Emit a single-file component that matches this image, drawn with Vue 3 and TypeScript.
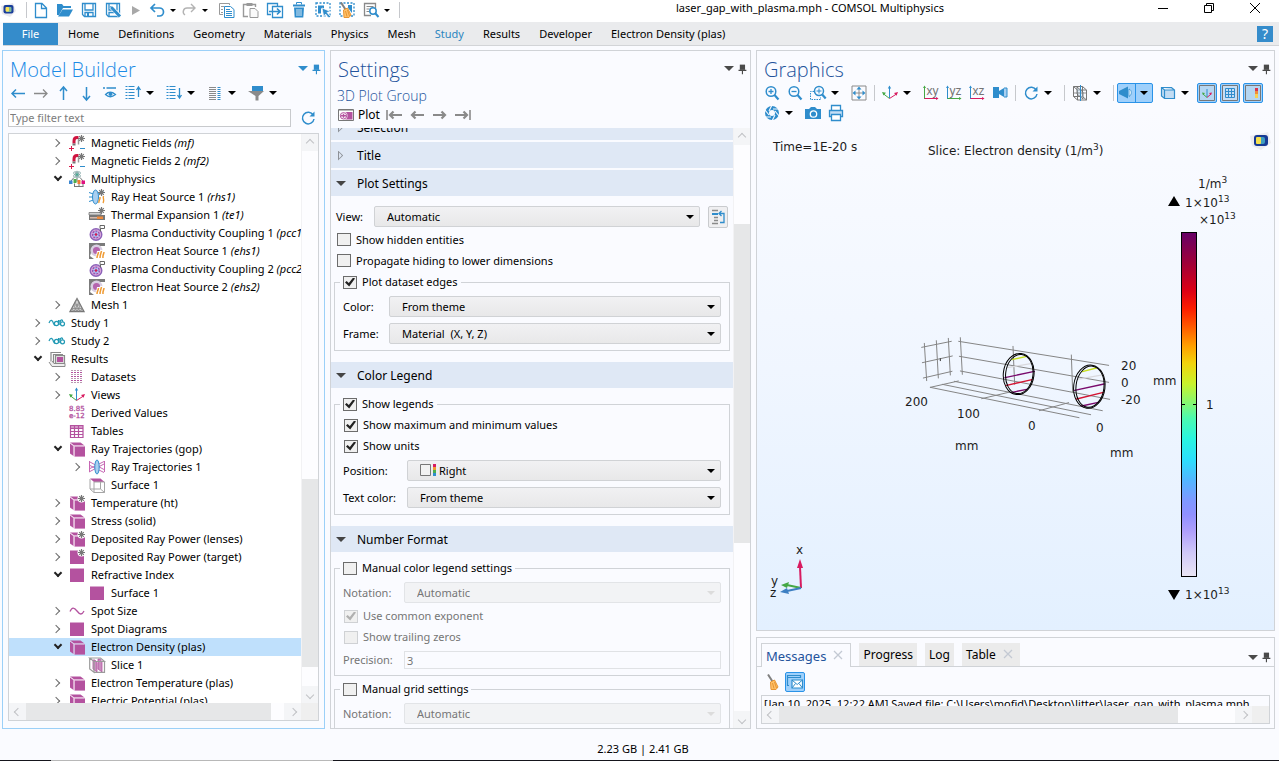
<script setup lang="ts">
import { ref } from 'vue'

type Tool = { kind: 'icon' | 'caret' | 'sep' | 'toggle'; icon?: string; label?: string }
type Node = { level: number; state: 'open' | 'closed' | 'leaf'; icon: string; text: string; tag?: string; selected?: boolean }

const B = '#2f8dcc'
const G = '#8a8a8a'
const M = '#b4529f'

const star = `<g stroke="#777" stroke-width="1.200"><path d="M12.500 0v7M9 3.500h7M10.200 1.200l4.600 4.600M14.800 1.200l-4.600 4.600"/></g><circle cx="12.500" cy="3.500" r="1.800" fill="#777"/>`
const cube = `<path d="M1 1.500h10.500l4 3H5.200z" fill="${M}"/><path d="M1 2.400l3.600 2.700v10L1 12.400z" fill="${M}"/><path d="M5.500 5.300H16V15.600H5.500z" fill="${M}"/><path d="M1 2l4 3h10.500M5 5v10.500" fill="none" stroke="#ecc9e5" stroke-width=".8"/>`
const plasma = `<circle cx="7" cy="9.500" r="5.800" fill="#dba9dc" stroke="#8c62b8" stroke-width="1.400"/><circle cx="7" cy="9.500" r="3.400" fill="#b9c3f2" stroke="#9b4fae" stroke-width="1.400" stroke-dasharray="2 1"/><path d="M7 6.500v6M4 9.500h6" stroke="#7f8fe0" stroke-width=".8"/><circle cx="7" cy="9.500" r="1.300" fill="#d81b4c"/><path d="M11.500 6.500v-3h-.500v-3h4.500v3h-4" fill="#fff" stroke="#666"/>`
const electron = `<path d="M0 0h16v3H0zM0 3h4l-3 10 4 3H0z" fill="#7b7b7b"/><circle cx="7.500" cy="7.500" r="4.800" fill="#b565ae" stroke="#d9cfe2" stroke-width="2.500"/><path d="M8 15c0-3 1.500-4 1.500-7M11 15c0-3 1-5 1.500-8M14 15c-.5-3 1-4 1-7" fill="none" stroke="#fff" stroke-width="3"/><path d="M8 15c0-3 1.500-4 1.500-6M11 15c0-3 1-5 1.500-7M14 15c-.5-3 1-4 1-6" fill="none" stroke="#ef9a32" stroke-width="1.500"/>`
const magnet = `<path d="M5 8.500V6C5 3.500 6 2.500 8 2.500h1.500" fill="none" stroke="#cf1440" stroke-width="3"/><path d="M9.500 4v5.500" stroke="#999" stroke-width="1.500"/><path d="M3.500 9.500h3" stroke="#777" stroke-width="2"/>${star}<path d="M0 13.500h5M2.500 11v5" stroke="#d81b4c"/><path d="M11 13.500h5" stroke="${B}"/>`
const study = `<path d="M0 8c1.500-4 3.500-3 4.500 .5.5 1.500 1 2 2 2M9.500 5v5M11 5v5" fill="none" stroke="#2199b4" stroke-width="1.200"/><circle cx="7.500" cy="8.500" r="2.100" fill="none" stroke="#2199b4" stroke-width="1.200"/><path d="M11 7c.5-3 3-2.500 2.500-.3" fill="none" stroke="#2199b4" stroke-width="1.200"/><circle cx="13.500" cy="8.800" r="2" fill="none" stroke="#2199b4" stroke-width="1.200"/>`
const broom = `<path d="M2 0.500l4.500 7" stroke="#808080" stroke-width="2"/><path d="M4.500 8l4-2 3.500 7-2 2.500H5z" fill="#ffc169" stroke="#e89532"/><path d="M6.500 9l1.500 5.500M8.500 8l2 6" stroke="#e89532" fill="none"/>`
const axesC = (x: string, y: string, z: string) => `<path d="M7.500 13V1.500" stroke="${y}"/><path d="M5.800 3.500l1.700-3 1.700 3z" fill="${y}"/><path d="M7.500 13.500L1 8.500" stroke="${x}"/><path d="M0 7l4 .8-2.500 2.600z" fill="${x}"/><path d="M7.500 13.500l7-4.500" stroke="${z}"/><path d="M16 7l-4 1 2.500 2.800z" fill="${z}"/>`
const plane = (t: string, a: string, b: string) => `<path d="M1.500 2v12" stroke="${a}"/><path d="M0 3l1.500-2.500L3 3z" fill="${a}"/><path d="M1.500 13.500h13" stroke="${b}"/><path d="M13 12l2.500 1.500L13 15z" fill="${b}"/><text x="3.500" y="9.500" font-family="Liberation Sans, sans-serif" font-size="12" fill="#757575">${t}</text>`
const listBase = (c: string) => [1.5, 4.5, 7.5, 10.5, 13.5].map((y) => `<path d="M3.500 ${y}h6" stroke="${c}"/><path d="M0.500 ${y}h2" stroke="${c}"/>`).join('')

const icons: Record<string, string> = {
  logo: `<path d="M0 4l12-3 3 8-6 6-8-3z" fill="#e9e9ee"/><rect x="2.500" y="3" width="10" height="8.500" rx="2" fill="#1a3e9a"/><rect x="5" y="5" width="5.500" height="5" rx="1" fill="#7fbb9a"/><rect x="4.500" y="5" width="3.500" height="4.500" rx="1" fill="#fbe25a"/>`,
  new: `<path d="M2.500 1.500h6.500l4.500 4.500v9.500h-11zM8.500 1.500v5h5" fill="none" stroke="${B}" stroke-width="1.300"/>`,
  open: `<path d="M0 2h5l1.500 2H14v2H6L2 13H0z" fill="${B}"/><path d="M5.500 7.500H16l-4 7H1z" fill="${B}"/>`,
  save: `<path d="M1.500 1.500h13v13h-11l-2-2z" fill="none" stroke="${B}" stroke-width="1.300"/><path d="M4 2v6h8V2" fill="none" stroke="${B}" stroke-width="1.300"/><path d="M4 14v-3.500h8V14" fill="none" stroke="${B}" stroke-width="1.300"/><path d="M6 11h2v3H6z" fill="${B}"/>`,
  saveas: `<path d="M1.500 1.500h13v13h-11l-2-2z" fill="none" stroke="${B}" stroke-width="1.300"/><path d="M4 2v6h8V2M4 14v-3.500h5" fill="none" stroke="${B}" stroke-width="1.300"/><path d="M6 5l10 10" stroke="#fff" stroke-width="4"/><path d="M6.500 5.500l8.500 9" stroke="${B}" stroke-width="3"/><path d="M5 4l1 3 2-2z" fill="${B}"/>`,
  play: `<path d="M5 4l8 4.500L5 13z" fill="#a8a8a8"/>`,
  undo: `<path d="M6 2L2 6l4 4M2 6h8.500a3.800 3.800 0 0 1 0 8H8" fill="none" stroke="${B}" stroke-width="1.700"/>`,
  redo: `<path d="M10 2l4 4-4 4M14 6H6a3.800 3.800 0 0 0-2 7" fill="none" stroke="#b3b3b3" stroke-width="1.400"/>`,
  copy: `<path d="M4 12.500H.5V1.500h10V3" fill="none" stroke="#999"/><path d="M2 4.500h3M2 7.500h2M2 10.500h2" stroke="#999"/><path d="M5.500 4.500h6l3.500 3v8H5.500z" fill="#fff" stroke="${B}"/><path d="M7 7.500h4M7 9.500h6M7 11.500h6M7 13.500h6" stroke="${B}"/>`,
  paste: `<path d="M5 14.500H.5V2.500h12V5" fill="none" stroke="#999" stroke-width="1.400"/><path d="M3.500 1h6v3h-6z" fill="#999"/><path d="M7 6.500h5l3 3v6H7z" fill="#fafafa" stroke="#999"/>`,
  dup: `<path d="M4 12.500H.5V1.500h10V4" fill="none" stroke="${B}" stroke-width="1.300"/><path d="M5.500 4.500h10v11h-10z" fill="#fff" stroke="${B}" stroke-width="1.300"/><path d="M2 9.500h11M10 6.500l3 3-3 3" fill="none" stroke="${B}" stroke-width="1.700"/>`,
  trash: `<path d="M2 3.500h12" stroke="${B}" stroke-width="2"/><path d="M5.500 2.500v-2h5v2" fill="none" stroke="${B}"/><path d="M3 5.500h10l-.7 10H3.700z" fill="${B}"/><path d="M6 7v7M8 7v7M10 7v7" stroke="#fff" stroke-width=".8"/>`,
  select: `<rect x="1" y="1" width="14" height="13" fill="none" stroke="${B}" stroke-width="1.300" stroke-dasharray="2 1.500"/><path d="M3 3.500h6v3H6v5H3z" fill="${B}"/><path d="M7 6l8.500 3.500-3.500 1 3.500 4-1.500 1.500-3.500-4-1.700 3z" fill="${B}" stroke="#fff" stroke-width=".7"/>`,
  clearsel: `<rect x="1" y="1" width="14" height="13" fill="none" stroke="${B}" stroke-width="1.300" stroke-dasharray="2 1.500"/><path d="M9 3h4v8l-4-5z" fill="${B}"/>${broom}`,
  find: `<path d="M8 13.500H1.500v-12h11V6" fill="none" stroke="${G}" stroke-width="1.300"/><path d="M3.500 4.500h7M3.500 7h3M3.500 9.500h3" stroke="${G}"/><circle cx="10" cy="9" r="3.200" fill="#fff" stroke="${B}" stroke-width="1.500"/><path d="M12.500 11.500l3 3.500" stroke="${B}" stroke-width="2"/>`,
  left: `<path d="M15 8.500H2M6 4.500l-4 4 4 4" fill="none" stroke="${B}" stroke-width="1.500"/>`,
  right: `<path d="M1 8.500h13M10 4.500l4 4-4 4" fill="none" stroke="${G}" stroke-width="1.300"/>`,
  up: `<path d="M7.500 15V3M4 6l3.500-4L11 6" fill="none" stroke="${B}" stroke-width="1.500"/>`,
  down: `<path d="M7.500 2v12M4 11l3.500 4 3.500-4" fill="none" stroke="${B}" stroke-width="1.500"/>`,
  eye: `<path d="M1 3h2M4.500 3H14" stroke="${B}" stroke-width="1.500"/><path d="M3.500 9.500Q8 5 13.500 9.500Q8 14 3.500 9.500z" fill="none" stroke="${B}" stroke-width="1.200"/><circle cx="8.500" cy="9.300" r="1.800" fill="${B}"/>`,
  collapse: `${listBase(B)}<path d="M13.500 12V3M11.500 5l2-3 2 3" fill="none" stroke="${B}" stroke-width="1.300"/>`,
  expand: `${listBase(B)}<path d="M13.500 3v9M11.500 10l2 3 2-3" fill="none" stroke="${B}" stroke-width="1.300"/>`,
  cols: [2.5, 4.5, 6.5, 8.5, 10.5, 12.5, 14.5].map((y) => `<path d="M2 ${y}h7" stroke="${G}"/><path d="M10.500 ${y}h3" stroke="${B}"/>`).join(''),
  funnel: `<path d="M4 1h11v5H4z" fill="${B}"/><path d="M0 6h16l-5.500 5v4.500h-3V11z" fill="${G}"/>`,
  refresh: `<path d="M13.200 5A5.800 5.800 0 1 0 14 9" fill="none" stroke="${B}" stroke-width="1.500"/><path d="M14.500 1.500v5h-5z" fill="${B}"/>`,
  magnet,
  multi: `<circle cx="8" cy="3.500" r="1.500" fill="#4aa892"/><ellipse cx="8" cy="3.500" rx="4" ry="1.800" fill="none" stroke="#8aa" stroke-width=".8" transform="rotate(35 8 3.500)"/><ellipse cx="8" cy="3.500" rx="4" ry="1.800" fill="none" stroke="#8aa" stroke-width=".8" transform="rotate(-35 8 3.500)"/><ellipse cx="8" cy="3.500" rx="1.600" ry="3.500" fill="none" stroke="#8aa" stroke-width=".8"/><path d="M5.500 15.500v-3M10 15.500v-3M14 15.500v-3M14.500 15.500H5M2 10l3-3.500M8 7v4M14 10l-3-3.500" fill="none" stroke="#777"/><path d="M0 9.500h3.500V13H0z" fill="#3b87d0"/><path d="M4.500 8h3v4h-3z" fill="#4cae4c"/><path d="M8.500 9h3v4h-3z" fill="#ef7d32"/><path d="M12.500 9.500H16V13h-3.500z" fill="#e0117f"/>`,
  ray: `<path d="M0 3.500l6 2M0 8h5M0 12.500l6-2M9 5l6-2" stroke="${B}"/><ellipse cx="6.500" cy="8" rx="3" ry="7" fill="#a9cff0" stroke="${B}"/>${star}<path d="M10 14c-1-2 1.500-3 1-6M14 14c2-3-.5-4 .5-7" fill="none" stroke="#ef9a32" stroke-width="1.400"/>`,
  thermal: `<path d="M0 5.500h12v2.500H0z" fill="#d2d2d2" stroke="#777" stroke-width=".8"/><path d="M0 8h16v5H0z" fill="#777"/><path d="M1 10h7v1.500H1z" fill="#d8b8a8"/><path d="M8 9.500h6v2.500H8z" fill="#f08b3c"/>${star}`,
  plasma,
  electron,
  mesh: `<path d="M8 1.500L15 14.500H1z" fill="#d0d0d0" stroke="#777" stroke-width="1.300"/><path d="M4.500 8h7L8 14.500zM2.700 11.500h10.600L11 14.500 6 5l2-3 2 3-5 9.500z" fill="none" stroke="#888" stroke-width=".8"/>`,
  study,
  results: `<path d="M2 11V1.500h10M4.500 13V3.500H14" fill="none" stroke="${G}" stroke-width="1.200"/><path d="M6.500 4.500h9v8h-9z" fill="#ddd" stroke="${G}" stroke-width="1.200"/><path d="M8 6h6v5H8z" fill="${M}"/><path d="M0 11l3 4.500h13v-3H5L3 10" fill="#eee" stroke="${G}"/>`,
  datasets: [1.5, 3.5, 5.5, 7.5, 9.5, 11.5, 13.5].map((y) => `<path d="M2 ${y}h11" stroke="${y % 4 === 1.5 ? '#b89ab0' : M}" stroke-dasharray="2 1"/>`).join(''),
  views: axesC('#45a845', B, '#d81b60'),
  derived: `<g font-family="DejaVu Sans, sans-serif" font-size="7" fill="${M}" stroke="${M}" stroke-width=".3"><text x="0" y="6">8.85</text><text x="0" y="13">e-12</text></g>`,
  tables: `<path d="M1 2h13v12.500H1z" fill="#fff"/><path d="M1 2h13v4H1z" fill="#d598c8"/><path d="M1.500 2.500h12.500v12H1.500zM1.500 5.500H14M1.500 8.500H14M1.500 11.500H14M5.500 2v12.500M9.500 2v12.500" fill="none" stroke="${M}" stroke-width="1.200"/>`,
  cube,
  cubestar: `${cube}<circle cx="12.500" cy="3.500" r="4" fill="#fff"/>${star}`,
  raytraj: `<path d="M0 2.500l15 8M0 13l15-8M0 6l15 7.500M0 10L15 2.500M.5 2v11M15.500 2v11" fill="none" stroke="#c667b3"/><ellipse cx="8" cy="8" rx="2.200" ry="7" fill="#a9cff0" stroke="${B}"/>`,
  surf3d: `<path d="M1 1.500h10.500l4 3.500H5z" fill="${M}"/><path d="M1 2v10l4 3.500h10.500V5H5v10.500M1 12h10.500l4 3.500M11.500 5v7" fill="none" stroke="#a6a6a6"/>`,
  square: `<path d="M1 1.500h14v13.500H1z" fill="${M}"/>`,
  squarestar: `<path d="M1 1.500h14v13.500H1z" fill="${M}"/><circle cx="12.500" cy="3.500" r="4" fill="#fff"/>${star}`,
  wave: `<path d="M1 8.500C3 4 5 4 8 8s5 4 7 0" fill="none" stroke="${M}" stroke-width="1.300"/>`,
  slice: `<path d="M4 3h2l2 3v9l-4-3zM9 2h2l2 3v10l-4-3z" fill="#c98dbe" stroke="${M}" stroke-width=".8"/><path d="M.7 1h10.800l4 3.500H5zM.7 1v11L5 15.300V4.500M5 15.300h10.500V4.500" fill="none" stroke="#9b9b9b" stroke-width="1.200"/>`,
  plot: `<path d="M.5 2.500h15v11H.5z" fill="#fff" stroke="#777"/><path d="M1 3.500h14" stroke="#bbb"/><path d="M6 5h8.500v7.500H6z" fill="${M}"/><circle cx="5.500" cy="8.800" r="4" fill="#fff"/><circle cx="5.500" cy="8.800" r="3.200" fill="#fff" stroke="${M}"/><path d="M3 8.800h5M5.500 6.800v4" fill="none" stroke="${M}" stroke-width="1.400"/>`,
  first: `<path d="M1 3v10" stroke="${G}" stroke-width="1.600"/><path d="M16 8H5M7.500 4.500L4 8l3.500 3.500" fill="none" stroke="${G}" stroke-width="2.200"/>`,
  prev: `<path d="M15 8H4M6.500 4.500L3 8l3.500 3.500" fill="none" stroke="${G}" stroke-width="2.200"/>`,
  next: `<path d="M1 8h11M9.500 4.500L13 8l-3.500 3.500" fill="none" stroke="${G}" stroke-width="2.200"/>`,
  last: `<path d="M0 8h11M8.500 4.500L12 8l-3.500 3.500" fill="none" stroke="${G}" stroke-width="2.200"/><path d="M15 3v10" stroke="${G}" stroke-width="1.600"/>`,
  goview: `<path d="M2 1.500h6M4 8.500h4M4 11.500h4M2 14.500h6" stroke="${G}" stroke-width="1.300"/><path d="M2 5h6" stroke="${B}" stroke-width="2"/><path d="M10 13.500h4v-9h-4M11.500 2L9 4.500 11.500 7" fill="none" stroke="${B}" stroke-width="1.300"/>`,
  zoomin: `<circle cx="7" cy="6.500" r="4.800" fill="none" stroke="${B}" stroke-width="1.500"/><path d="M4.500 6.500h5M7 4v5" stroke="${B}" stroke-width="1.300"/><path d="M10.500 10l4 4.500" stroke="${B}" stroke-width="2.200"/>`,
  zoomout: `<circle cx="7" cy="6.500" r="4.800" fill="none" stroke="${B}" stroke-width="1.500"/><path d="M4.500 6.500h5" stroke="${B}" stroke-width="1.300"/><path d="M10.500 10l4 4.500" stroke="${B}" stroke-width="2.200"/>`,
  zoombox: `<path d="M4 6.500H.5v8h10v-2" fill="none" stroke="${B}" stroke-dasharray="1.500 1"/><circle cx="9" cy="6" r="4.500" fill="#fafbff" stroke="${B}" stroke-width="1.500"/><path d="M6.500 6h5M9 3.500v5" stroke="${B}"/><path d="M12.200 9.500l3.500 4" stroke="${B}" stroke-width="2.200"/>`,
  extents: `<path d="M1 1h14v14H1z" fill="none" stroke="${G}"/><path d="M8 3v10M3 8h10" stroke="${G}"/><path d="M8 1.500l2.500 3h-5zM8 14.500l2.500-3h-5zM1.500 8l3-2.500v5zM14.500 8l-3-2.500v5z" fill="${B}"/>`,
  axes: axesC('#45a845', B, '#d81b60'),
  xy: plane('xy', '#45a845', '#d81b60'),
  yz: plane('yz', B, '#45a845'),
  xz: plane('xz', B, '#d81b60'),
  camlens: `<path d="M1 2h6v11H1z" fill="${B}"/><path d="M7 6l5-3v9L7 9z" fill="${B}"/><path d="M12 3h3v9h-3" fill="#a9cff0" stroke="${B}"/>`,
  clip: `<path d="M1.500 1.500h9l4 3.500v10h-9l-4-3.500zM1.500 1.500l4 3.500h9M5.500 5v10M10.500 1.500v10h-9M10.500 11.500l4 3.500" fill="none" stroke="#777"/><path d="M5 2l6 5v7l-6-5z" fill="#bdd9ee" fill-opacity=".5" stroke="#666" stroke-width=".8"/><path d="M1.500 8h13" stroke="#777" stroke-width=".8"/><path d="M8.500 0v16" stroke="${B}"/>`,
  light: `<path d="M1 6l2-1 7-3.500v12L3 10 1 9z" fill="${B}"/><path d="M11 4c3 1 3 6 0 7.500z" fill="#fff" stroke="${B}" stroke-width=".8"/>`,
  transp: `<path d="M1.500 2.500h10l3 2.500v8.500H4.500l-3-2.500zM1.500 2.500l3 2.500h10M4.500 5v8.500" fill="#c2dcf3" stroke="${B}" stroke-width="1.200"/>`,
  taxes: `<path d="M.5.5h15v15H.5z" fill="#b5d6f2" stroke="#777"/><path d="M8 12V4" stroke="${B}"/><path d="M8 12.500L4 9" stroke="#45a845"/><path d="M3 7.500l3 .6-2 2.200z" fill="#45a845"/><path d="M8 12.500L12 9" stroke="#d81b60"/><path d="M13 7.500l-3 .6 2 2.200z" fill="#d81b60"/>`,
  tgrid: `<path d="M.5.5h15v15H.5z" fill="#c5def5" stroke="#777"/><path d="M3.500 3.500h9v9h-9zM6.500 3v10M9.500 3v10M3 6.500h10M3 9.500h10" fill="none" stroke="${B}"/>`,
  tlegend: `<path d="M.5.5h15v15H.5z" fill="#b5d6f2" stroke="#777"/><path d="M10 3h3v3h-3z" fill="#d9344d"/><path d="M10 6h3v3h-3z" fill="#f08b3c"/><path d="M10 9h3v4h-3z" fill="#f7d154"/>`,
  shutter: `<circle cx="8" cy="8" r="5" fill="none" stroke="${B}" stroke-width="4"/><path d="M8 0l-3 6M15 4L9 4M15 11l-4-5M8 16l3-6M1 12h6M1 5l4 5" stroke="#fafbff" stroke-width="1.100"/>`,
  camera: `<path d="M0 4h4l2-2h4l2 2h4v10H0z" fill="${B}"/><circle cx="8.500" cy="9" r="3.200" fill="none" stroke="#fff" stroke-width="1.300"/>`,
  printer: `<path d="M3.500 5V.5h9V5" fill="#fff" stroke="${B}" stroke-width="1.300"/><path d="M1.500 5.500h13v6h-13z" fill="#c5def5" stroke="${B}" stroke-width="1.300"/><path d="M3.500 9.500h9v6h-9z" fill="#fff" stroke="${B}" stroke-width="1.300"/>`,
  broom,
  msg: `<path d="M2 11.500H.5V1.500h13V4" fill="none" stroke="${B}" stroke-width="1.200"/><path d="M1 3.500h12" stroke="${B}"/><path d="M5 6h10.500v8H5z" fill="#fff" stroke="${B}" stroke-width="1.200"/><path d="M5 6l5.200 4.500L15.500 6M5 14l3.500-4.500M15.500 14L12 9.500" fill="none" stroke="${B}"/>`,
  pin: `<path d="M5.500 3h6v6h-6z" fill="currentColor"/><path d="M4 9.500h9M8.500 10v4" stroke="currentColor" stroke-width="1.300"/>`,
  min: `<path d="M3 8.500h10" stroke="#000"/>`,
  restore: `<path d="M3.500 5.500h7v7h-7zM5.500 5V3.500h7v7H11" fill="none" stroke="#000"/>`,
  close: `<path d="M3 3l10 10M13 3L3 13" stroke="#000"/>`,
  tabx: `<path d="M4 3l8 8M12 3l-8 8" stroke="#c3c9d3" stroke-width="1.300"/>`,
}

const I = (icon: string, label: string): Tool => ({ kind: 'icon', icon, label })
const T = (icon: string, label: string): Tool => ({ kind: 'toggle', icon, label })
const caret: Tool = { kind: 'caret', label: 'More' }
const sep: Tool = { kind: 'sep' }

const quick: Tool[] = [
  I('new', 'New'), I('open', 'Open'), I('save', 'Save'), I('saveas', 'Save as'), I('play', 'Run'),
  I('undo', 'Undo'), caret, I('redo', 'Redo'), caret,
]
const quick2: Tool[] = [
  I('copy', 'Copy'), I('paste', 'Paste'), I('dup', 'Duplicate'), I('trash', 'Delete'),
  I('select', 'Select all'), I('clearsel', 'Clear selection'), I('find', 'Find'), caret,
]
const builderTools: Tool[] = [
  I('left', 'Previous node'), I('right', 'Next node'), I('up', 'Move up'), I('down', 'Move down'), I('eye', 'Show'),
  I('collapse', 'Collapse all'), caret, I('expand', 'Expand all'), caret, I('cols', 'Node text'), caret, I('funnel', 'Filter'), caret,
]
const graphicsTools: Tool[] = [
  I('zoomin', 'Zoom in'), I('zoomout', 'Zoom out'), I('zoombox', 'Zoom box'), caret, I('extents', 'Zoom extents'), sep,
  I('axes', 'Default view'), caret, I('xy', 'XY view'), I('yz', 'YZ view'), I('xz', 'XZ view'), I('camlens', 'Projection'), sep,
  I('refresh', 'Rotate'), caret, sep, I('clip', 'Clipping'), caret, sep,
]
const graphicsToggles: Tool[] = [T('taxes', 'Show axes'), T('tgrid', 'Show grid'), T('tlegend', 'Show legends')]
const graphicsRow2: Tool[] = [I('shutter', 'Snapshot'), caret, I('camera', 'Image'), I('printer', 'Print')]

const menu = ['Home', 'Definitions', 'Geometry', 'Materials', 'Physics', 'Mesh', 'Study', 'Results', 'Developer', 'Electron Density (plas)']

const nodes: Node[] = [
  { level: 2, state: 'closed', icon: 'magnet', text: 'Magnetic Fields', tag: '(mf)' },
  { level: 2, state: 'closed', icon: 'magnet', text: 'Magnetic Fields 2', tag: '(mf2)' },
  { level: 2, state: 'open', icon: 'multi', text: 'Multiphysics' },
  { level: 3, state: 'leaf', icon: 'ray', text: 'Ray Heat Source 1', tag: '(rhs1)' },
  { level: 3, state: 'leaf', icon: 'thermal', text: 'Thermal Expansion 1', tag: '(te1)' },
  { level: 3, state: 'leaf', icon: 'plasma', text: 'Plasma Conductivity Coupling 1', tag: '(pcc1)' },
  { level: 3, state: 'leaf', icon: 'electron', text: 'Electron Heat Source 1', tag: '(ehs1)' },
  { level: 3, state: 'leaf', icon: 'plasma', text: 'Plasma Conductivity Coupling 2', tag: '(pcc2)' },
  { level: 3, state: 'leaf', icon: 'electron', text: 'Electron Heat Source 2', tag: '(ehs2)' },
  { level: 2, state: 'closed', icon: 'mesh', text: 'Mesh 1' },
  { level: 1, state: 'closed', icon: 'study', text: 'Study 1' },
  { level: 1, state: 'closed', icon: 'study', text: 'Study 2' },
  { level: 1, state: 'open', icon: 'results', text: 'Results' },
  { level: 2, state: 'closed', icon: 'datasets', text: 'Datasets' },
  { level: 2, state: 'closed', icon: 'views', text: 'Views' },
  { level: 2, state: 'leaf', icon: 'derived', text: 'Derived Values' },
  { level: 2, state: 'leaf', icon: 'tables', text: 'Tables' },
  { level: 2, state: 'open', icon: 'cube', text: 'Ray Trajectories (gop)' },
  { level: 3, state: 'closed', icon: 'raytraj', text: 'Ray Trajectories 1' },
  { level: 3, state: 'leaf', icon: 'surf3d', text: 'Surface 1' },
  { level: 2, state: 'closed', icon: 'cubestar', text: 'Temperature (ht)' },
  { level: 2, state: 'closed', icon: 'cube', text: 'Stress (solid)' },
  { level: 2, state: 'closed', icon: 'cubestar', text: 'Deposited Ray Power (lenses)' },
  { level: 2, state: 'closed', icon: 'squarestar', text: 'Deposited Ray Power (target)' },
  { level: 2, state: 'open', icon: 'square', text: 'Refractive Index' },
  { level: 3, state: 'leaf', icon: 'square', text: 'Surface 1' },
  { level: 2, state: 'closed', icon: 'wave', text: 'Spot Size' },
  { level: 2, state: 'closed', icon: 'square', text: 'Spot Diagrams' },
  { level: 2, state: 'open', icon: 'cube', text: 'Electron Density (plas)', selected: true },
  { level: 3, state: 'leaf', icon: 'slice', text: 'Slice 1' },
  { level: 2, state: 'closed', icon: 'cube', text: 'Electron Temperature (plas)' },
  { level: 2, state: 'closed', icon: 'cube', text: 'Electric Potential (plas)' },
]

const rainbow: [number, string][] = [
  [0, '#660066'], [0.09, '#a00038'], [0.17, '#dd0014'], [0.22, '#fb1c00'], [0.27, '#ff5500'], [0.33, '#ffa000'],
  [0.38, '#f2d40c'], [0.44, '#c8f32c'], [0.5, '#80f878'], [0.54, '#4cfab0'], [0.6, '#2af5e0'], [0.66, '#2cdffc'],
  [0.72, '#52b6ff'], [0.78, '#7f98ff'], [0.82, '#9090ff'], [0.87, '#b0a0fb'], [0.93, '#cfc8f8'], [1, '#eae6f4'],
]

const hidden = ref(false)
const propagate = ref(false)
const edges = ref(true)
const legends = ref(true)
const maxmin = ref(true)
const units = ref(true)
const manualLegend = ref(false)
const manualGrid = ref(false)
</script>

<template>
  <div class="app">
    <header class="titlebar">
      <svg class="ic logo" viewBox="0 0 16 16" v-html="icons.logo"></svg>
      <i class="sep quick-sep"></i>
      <div class="quick">
        <template v-for="(t, i) in quick" :key="i">
          <button v-if="t.kind === 'caret'" class="caret" :aria-label="t.label"></button>
          <button v-else class="tool" :class="{ narrow: t.icon === 'play' }" :aria-label="t.label"><svg class="ic" viewBox="0 0 16 16" v-html="icons[t.icon!]"></svg></button>
        </template>
      </div>
      <div class="quick">
        <template v-for="(t, i) in quick2" :key="i">
          <button v-if="t.kind === 'caret'" class="caret" :aria-label="t.label"></button>
          <button v-else class="tool" :aria-label="t.label"><svg class="ic" viewBox="0 0 16 16" v-html="icons[t.icon!]"></svg></button>
        </template>
      </div>
      <i class="sep"></i>
      <h1 class="title">laser_gap_with_plasma.mph - COMSOL Multiphysics</h1>
      <button v-for="w in ['min', 'restore', 'close']" :key="w" class="win" :aria-label="w"><svg class="ic" viewBox="0 0 16 16" v-html="icons[w]"></svg></button>
    </header>

    <nav class="ribbon">
      <button class="file">File</button>
      <button v-for="m in menu" :key="m" class="menu" :class="{ on: m === 'Study' }">{{ m }}</button>
      <button class="help">?</button>
    </nav>

    <main class="work">
      <section class="panel builder">
        <div class="head"><h2>Model Builder</h2><button class="caret" aria-label="Panel menu"></button><button class="pin" aria-label="Pin"><svg class="ic" viewBox="0 0 16 16" v-html="icons.pin"></svg></button></div>
        <div class="tools">
          <template v-for="(t, i) in builderTools" :key="i">
            <button v-if="t.kind === 'caret'" class="caret" :aria-label="t.label"></button>
            <button v-else class="tool" :aria-label="t.label"><svg class="ic" viewBox="0 0 16 16" v-html="icons[t.icon!]"></svg></button>
          </template>
        </div>
        <div class="filter">
          <input type="text" placeholder="Type filter text" aria-label="Type filter text" />
          <button class="tool" aria-label="Refresh"><svg class="ic" viewBox="0 0 16 16" v-html="icons.refresh"></svg></button>
        </div>
        <div class="treebox">
          <ul class="tree" role="tree">
            <li v-for="(n, i) in nodes" :key="i" role="treeitem" :class="['lv' + n.level, { sel: n.selected }]">
              <span class="exp" :class="n.state"></span>
              <svg class="ic" viewBox="0 0 16 16" v-html="icons[n.icon]"></svg>
              <span class="name">{{ n.text }} <em v-if="n.tag">{{ n.tag }}</em></span>
            </li>
          </ul>
          <div class="vbar"><i class="btn up"></i><i class="space"></i><i class="thumb"></i><i class="tail"></i><i class="btn down"></i></div>
          <div class="hbar"><i class="btn left"></i><i class="thumb"></i><i class="tail"></i><i class="btn right"></i></div>
          <i class="corner"></i>
        </div>
      </section>

      <section class="panel settings">
        <div class="head"><h2>Settings</h2><button class="caret" aria-label="Panel menu"></button><button class="pin" aria-label="Pin"><svg class="ic" viewBox="0 0 16 16" v-html="icons.pin"></svg></button></div>
        <h3>3D Plot Group</h3>
        <div class="plotbar">
          <button class="plot"><svg class="ic" viewBox="0 0 16 16" v-html="icons.plot"></svg>Plot</button>
          <button v-for="p in ['first', 'prev', 'next', 'last']" :key="p" class="tool" :aria-label="p"><svg class="ic" viewBox="0 0 16 16" v-html="icons[p]"></svg></button>
        </div>
        <div class="scroller">
          <div class="form">
            <button class="sec closed">Selection</button>
            <button class="sec closed">Title</button>
            <button class="sec">Plot Settings</button>
            <div class="body">
              <div class="row view">
                <label for="view">View:</label>
                <span class="pick"><select id="view"><option>Automatic</option></select></span>
                <button class="go" aria-label="Go to source"><svg class="ic" viewBox="0 0 16 16" v-html="icons.goview"></svg></button>
              </div>
              <label class="check"><input v-model="hidden" type="checkbox" />Show hidden entities</label>
              <label class="check"><input v-model="propagate" type="checkbox" />Propagate hiding to lower dimensions</label>
            </div>
            <fieldset class="w-s">
              <legend><label class="check"><input v-model="edges" type="checkbox" />Plot dataset edges</label></legend>
              <div class="row"><label for="color">Color:</label><span class="pick"><select id="color"><option>From theme</option></select></span></div>
              <div class="row"><label for="frame">Frame:</label><span class="pick"><select id="frame"><option>Material&nbsp; (X, Y, Z)</option></select></span></div>
            </fieldset>
            <button class="sec spaced">Color Legend</button>
            <fieldset class="w-l topped">
              <legend><label class="check"><input v-model="legends" type="checkbox" />Show legends</label></legend>
              <label class="check inner"><input v-model="maxmin" type="checkbox" />Show maximum and minimum values</label>
              <label class="check inner"><input v-model="units" type="checkbox" />Show units</label>
              <div class="row"><label for="pos">Position:</label><span class="pick withicon"><svg class="posicon" viewBox="0 0 16 13"><path d="M.5.5h10v11H.5z" fill="#f2f2f2" stroke="#777" /><path d="M13 0h3v3h-3z" fill="#d81b60" /><path d="M13 3h3v3h-3z" fill="#ef9a32" /><path d="M13 6h3v3h-3z" fill="#4cae4c" /><path d="M13 9h3v3h-3z" fill="#2f8dcc" /></svg><select id="pos"><option>Right</option></select></span></div>
              <div class="row"><label for="tcol">Text color:</label><span class="pick"><select id="tcol"><option>From theme</option></select></span></div>
            </fieldset>
            <button class="sec spaced">Number Format</button>
            <fieldset class="w-m topped">
              <legend><label class="check"><input v-model="manualLegend" type="checkbox" />Manual color legend settings</label></legend>
              <div class="row off"><label for="not1">Notation:</label><span class="pick"><select id="not1" disabled><option>Automatic</option></select></span></div>
              <label class="check inner off"><input type="checkbox" checked disabled />Use common exponent</label>
              <label class="check inner off"><input type="checkbox" disabled />Show trailing zeros</label>
              <div class="row off entry"><label for="prec">Precision:</label><input id="prec" class="text" type="text" value="3" disabled /></div>
            </fieldset>
            <fieldset class="w-m next">
              <legend><label class="check"><input v-model="manualGrid" type="checkbox" />Manual grid settings</label></legend>
              <div class="row off"><label for="not2">Notation:</label><span class="pick"><select id="not2" disabled><option>Automatic</option></select></span></div>
            </fieldset>
          </div>
          <div class="vbar"><i class="btn up"></i><i class="space"></i><i class="thumb"></i><i class="tail"></i><i class="btn down"></i></div>
        </div>
      </section>

      <div class="rightcol">
        <section class="panel graphics">
          <div class="head"><h2>Graphics</h2><button class="caret" aria-label="Panel menu"></button><button class="pin" aria-label="Pin"><svg class="ic" viewBox="0 0 16 16" v-html="icons.pin"></svg></button></div>
          <div class="tools">
            <template v-for="(t, i) in graphicsTools" :key="i">
              <button v-if="t.kind === 'caret'" class="caret" :aria-label="t.label"></button>
              <i v-else-if="t.kind === 'sep'" class="sep"></i>
              <button v-else class="tool" :aria-label="t.label"><svg class="ic" viewBox="0 0 16 16" v-html="icons[t.icon!]"></svg></button>
            </template>
            <span class="split"><button aria-label="Scene light"><svg class="ic" viewBox="0 0 16 16" v-html="icons.light"></svg></button><button class="caret" aria-label="Light options"></button></span>
            <button class="tool" aria-label="Transparency"><svg class="ic" viewBox="0 0 16 16" v-html="icons.transp"></svg></button>
            <button class="caret" aria-label="More"></button>
            <button v-for="t in graphicsToggles" :key="t.icon" class="toggle" :aria-label="t.label"><svg class="ic" viewBox="0 0 16 16" v-html="icons[t.icon!]"></svg></button>
          </div>
          <div class="tools">
            <template v-for="(t, i) in graphicsRow2" :key="i">
              <button v-if="t.kind === 'caret'" class="caret" :aria-label="t.label"></button>
              <button v-else class="tool" :aria-label="t.label"><svg class="ic" viewBox="0 0 16 16" v-html="icons[t.icon!]"></svg></button>
            </template>
          </div>
          <svg class="canvas" viewBox="0 -1 517 504" preserveAspectRatio="xMidYMin meet">
            <defs>
              <linearGradient id="rainbow" x1="0" y1="0" x2="0" y2="1">
                <stop v-for="s in rainbow" :key="s[0]" :offset="s[0]" :stop-color="s[1]" />
              </linearGradient>
            </defs>
            <text x="16" y="27">Time=1E-20 s</text>
            <text x="171" y="31">Slice: Electron density (1/m<tspan class="sup" dy="-5">3</tspan><tspan dy="5">)</tspan></text>
            <g transform="translate(493 7)">
              <path d="M0 5L18 1l3 11-10 7-9-4z" fill="#ececf0" /><rect x="4" y="4" width="14" height="11" rx="3" fill="#173a94" /><rect x="7" y="6" width="8" height="7" rx="2" fill="#3f9cc0" /><rect x="6" y="6" width="5" height="7" rx="1" fill="#f6e04e" />
            </g>
            <text x="441" y="64">1/m<tspan class="sup" dy="-5">3</tspan></text>
            <path d="M411 82h12l-6-10z" />
            <text x="428" y="83">1×10<tspan class="sup" dy="-5">13</tspan></text>
            <text x="442" y="100">×10<tspan class="sup" dy="-5">13</tspan></text>
            <rect x="424.500" y="108.500" width="15" height="344" fill="url(#rainbow)" stroke="#000" />
            <path d="M425 280.500h3M436 280.500h3" stroke="#000" />
            <text x="449" y="285">1</text>
            <path d="M411 466h12l-6 10z" />
            <text x="428" y="475">1×10<tspan class="sup" dy="-5">13</tspan></text>

            <g transform="translate(133 196) scale(.33333)" fill="none" stroke-linecap="round">
              <g stroke="#858585" stroke-width="3">
                <path d="M103 70l7 112M139 62l6 112M175 55l6 110M95 82l89-18M97 128l90-20M100 174l86-20M211 53l6 110M206 64l450 72M208 109l448 78M211 153l448 85M369 79l5 114M544 105l4 110" />
                <path d="M121 202l446 91M157 193l445 91M193 184l444 88M121 202l84-19M275 236l85-20M448 272l88-24" />
                <path d="M151 116v6" stroke="#333" />
              </g>
              <g stroke-width="4">
                <path d="M366 119l44-10M577 155l42-11" stroke="#c8e020" />
                <path d="M352 143l75-13M562 178l80-14" stroke="#d9d9dd" />
                <path d="M345 173l88-19M554 211l88-19M366 217l44-9M575 258l50-11" stroke="#790a6c" />
                <path d="M350 196l76-17M560 237l80-20" stroke="#d31432" />
              </g>
              <g stroke="#000" stroke-width="3">
                <ellipse cx="386" cy="162" rx="46" ry="62" transform="rotate(7 386 162)" /><ellipse cx="388" cy="162" rx="41" ry="59" transform="rotate(7 388 162)" />
                <ellipse cx="598" cy="200" rx="47" ry="65" transform="rotate(7 598 200)" /><ellipse cx="600" cy="200" rx="42" ry="62" transform="rotate(7 600 200)" />
              </g>
            </g>
            <text x="364" y="246">20</text>
            <text x="364" y="263">0</text>
            <text x="364" y="280">-20</text>
            <text x="396" y="261">mm</text>
            <text x="148" y="282">200</text>
            <text x="200" y="294">100</text>
            <text x="271" y="306">0</text>
            <text x="339" y="308">0</text>
            <text x="198" y="326">mm</text>
            <text x="353" y="333">mm</text>

            <g transform="translate(44 464)">
              <path d="M0 0L-1-21" stroke="#d81b60" stroke-width="2" /><path d="M-4-20h6L-1-29z" fill="#d81b60" />
              <path d="M0 0l-14-3" stroke="#45a845" stroke-width="2" /><path d="M-20-3l8-3-2 6z" fill="#45a845" />
              <path d="M0 0l-14 3" stroke="#3d7fc2" stroke-width="2" /><path d="M-21 4l7-4 2 6z" fill="#3d7fc2" />
            </g>
            <text x="39" y="430">x</text>
            <text x="14" y="461">y</text>
            <text x="13" y="473">z</text>
          </svg>
        </section>

        <section class="panel messages">
          <div class="tabs">
            <button class="tab on">Messages<svg class="ic" viewBox="0 0 16 16" v-html="icons.tabx"></svg></button>
            <button class="tab">Progress</button>
            <button class="tab">Log</button>
            <button class="tab">Table<svg class="ic" viewBox="0 0 16 16" v-html="icons.tabx"></svg></button>
            <i class="fill"></i>
            <button class="caret" aria-label="Panel menu"></button><button class="pin" aria-label="Pin"><svg class="ic" viewBox="0 0 16 16" v-html="icons.pin"></svg></button>
          </div>
          <div class="msgtools">
            <button class="tool" aria-label="Clear"><svg class="ic" viewBox="0 0 16 16" v-html="icons.broom"></svg></button>
            <button class="toggle" aria-label="Show messages"><svg class="ic" viewBox="0 0 16 16" v-html="icons.msg"></svg></button>
          </div>
          <div class="log">
            <p>[Jan 10, 2025, 12:22 AM] Saved file: C:\Users\mofid\Desktop\Jitter\laser_gap_with_plasma.mph</p>
            <i class="side"></i>
            <div class="hbar"><i class="btn left"></i><i class="thumb"></i><i class="tail"></i><i class="btn right"></i></div>
            <i class="corner"></i>
          </div>
        </section>
      </div>
    </main>

    <footer class="status">2.23 GB | 2.41 GB</footer>
  </div>
</template>

<style>
html, body { margin: 0; background: #fafbff; }
</style>

<style scoped>
.app { height: 100vh; min-height: 600px; display: flex; flex-direction: column; background: #fafbff; color: #000; font: 11px/16px "Noto Sans", "Open Sans", sans-serif; overflow: hidden; }
.app *, .app *::before, .app *::after { box-sizing: border-box; }
button { font: inherit; color: inherit; background: none; border: 0; padding: 0; margin: 0; display: flex; align-items: center; justify-content: center; flex: none; }
h1, h2, h3, p, ul { margin: 0; padding: 0; font-weight: 400; }
i { display: block; flex: none; }
.ic { width: 16px; height: 16px; display: block; flex: none; overflow: visible; }

.tool { width: 23px; height: 20px; }
.caret { width: 12px; height: 20px; }
.caret::before { content: ""; border: 4px solid transparent; border-top-color: #000; border-bottom-width: 0; }
.sep { width: 8px; height: 16px; display: flex; justify-content: center; }
.sep::before { content: ""; width: 1px; height: 16px; background: #c6c8cc; }

.titlebar { flex: none; height: 22px; display: flex; align-items: center; background: #fff; padding-bottom: 2px; }
.titlebar .logo { margin: 0 6px 0 1px; }
.titlebar .tool { width: 24px; height: 20px; }
.titlebar .tool.narrow { width: 20px; }
.titlebar .caret { width: 8px; }
.titlebar .caret::before { border-width: 3px 3px 0; }
.quick { display: flex; margin-right: 6px; }
.quick + .quick { margin-right: 4px; }
.titlebar .quick-sep { width: 6px; }
.title { flex: 1; padding: 0 0 4px 76px; text-align: center; font-size: 11px; line-height: 16px; white-space: nowrap; overflow: hidden; }
.win { width: 46px; height: 20px; padding: 0 2px 4px 0; }

.ribbon { flex: none; height: 24px; display: flex; align-items: center; background: #eaebed; border-bottom: 1px solid #d2d4d7; margin-left: 3px; padding: 1px 6px 0 0; }
.file { width: 55px; height: 22px; background: #358ccb; color: #fff; }
.menu { padding: 0 9px 0 10px; height: 22px; white-space: nowrap; }
.menu.on { color: #2c86c0; }
.help { width: 16px; height: 16px; margin-left: auto; background: #358ccb; color: #fff; font-size: 14px; }

.work { flex: 1; min-height: 0; display: grid; grid-template-columns: 323fr 421fr 519fr; grid-template-rows: minmax(0, 1fr); gap: 5px; padding: 4px 4px 0 2px; }
.panel { border: 1px solid #d0d3d7; min-width: 0; min-height: 0; display: flex; flex-direction: column; }
.builder { border-color: #9bd0f8; padding-bottom: 7px; }
.head { flex: none; height: 32px; display: flex; align-items: center; padding: 3px 1px 0 7px; color: #4a4a4a; }
.head h2 { flex: 1; padding-top: 2px; font: 300 20px/28px "Open Sans", sans-serif; color: #23539c; }
.head .caret::before, .tabs > .caret::before { border-width: 5px 5px 0; border-top-color: currentColor; }
.pin { width: 14px; height: 20px; }
.pin .ic { width: 14px; height: 14px; }
.builder .head { color: #2f8dcc; }
.builder .head h2 { color: #1c8be6; }
.tools { flex: none; height: 20px; display: flex; align-items: center; padding-left: 3px; }
.tools .caret { margin-right: 6px; }
.filter { flex: none; display: flex; align-items: center; padding: 5px 5px 6px 5px; height: 30px; }
.filter input { flex: 1; min-width: 0; height: 18px; border: 1px solid #c8cacd; background: #fff; font: inherit; padding: 0 1px; outline: 0; margin-right: 5px; }
.filter input::placeholder { color: #7c7c7c; opacity: 1; }

.treebox { flex: 1; min-height: 0; margin: 0 5px; border: 1px solid #d0d3d7; background: #fff; display: grid; grid-template-columns: minmax(0, 1fr) 17px; grid-template-rows: minmax(0, 1fr) 17px; }
.tree { list-style: none; overflow: hidden; }
.tree li { height: 18px; display: flex; align-items: center; white-space: nowrap; }
.lv1 { padding-left: 21px; }
.lv2 { padding-left: 41px; }
.lv3 { padding-left: 61px; }
.sel { background: #bfe0fc; }
.exp { width: 16px; height: 16px; margin-right: 3px; display: flex; align-items: center; justify-content: center; flex: none; }
.exp::before { content: ""; width: 6px; height: 6px; transform: rotate(45deg); }
.exp.leaf::before { content: none; }
.exp.closed { padding-right: 4px; }
.exp.closed::before { border: solid #6b6b6b; border-width: 1px 1px 0 0; }
.exp.open { padding-bottom: 4px; }
.exp.open::before { border: solid #222; border-width: 0 2px 2px 0; }
.name { margin-left: 6px; }

.vbar { display: flex; flex-direction: column; border-left: 1px solid #f2f2f4; background: #fdfdff; }
.hbar { display: flex; background: #fdfdff; min-width: 0; height: 17px; }
.btn { width: 17px; height: 17px; background: #f4f5f7; display: flex; align-items: center; justify-content: center; }
.vbar .btn { width: 16px; }
.btn::before { content: ""; width: 6px; height: 6px; border: solid #c0c2c5; border-width: 1px 1px 0 0; }
.btn.up::before { transform: rotate(-45deg); }
.btn.down::before { transform: rotate(135deg); }
.btn.left::before { transform: rotate(-135deg); }
.btn.right::before { transform: rotate(45deg); }
.thumb { background: #e6e7e8; }
.corner { background: #efefef; }
.builder .vbar .space { flex: 328 0 0; }
.builder .vbar .thumb { flex: 188 0 0; }
.builder .vbar .tail { flex: 19 0 0; }
.builder .hbar .thumb { flex: 245 0 0; }
.builder .hbar .tail { flex: 13 0 0; }

.settings h3 { flex: none; height: 22px; padding-left: 6px; font: 300 14px/26px "Open Sans", sans-serif; color: #23539c; }
.plotbar { flex: none; height: 23px; display: flex; align-items: center; padding: 0 0 3px 7px; }
.plot { margin-right: 3px; gap: 4px; font-size: 12px; }
.scroller { flex: 1; min-height: 0; display: grid; grid-template-columns: minmax(0, 1fr) 17px; overflow: hidden; }
.form { overflow: hidden; min-height: 0; display: flex; flex-direction: column; justify-content: flex-start; }
.form > * { flex: none; }
.sec { height: 26px; margin-bottom: 2px; background: #dfe8f5; justify-content: flex-start; font-size: 12px; padding: 1px 0 0 5px; }
.sec:first-child { margin-top: -14px; }
.sec::before { content: ""; border: 5px solid transparent; border-top-color: #444; border-bottom-width: 0; width: 0; margin-right: 11px; }
.sec.closed::before { content: ""; width: 8px; height: 10px; border: 0; background: #8d9197; clip-path: polygon(25% 0, 90% 50%, 25% 100%, 25% 0, 38% 20%, 38% 80%, 74% 50%, 38% 20%); margin-right: 13px; }
.sec.spaced { margin-top: 11px; }
.body { padding: 8px 5px 4px; }
.row { display: flex; align-items: center; height: 21px; margin-bottom: 6px; }
.row.entry { height: 18px; }
.row > label { flex: none; }
.view { gap: 8px; margin-bottom: 2px; }
.view > label { width: 30px; }
.w-s .row > label { width: 46px; }
.w-m .row > label { width: 61px; }
.w-l .row > label { width: 64px; }
.pick { position: relative; flex: 1; min-width: 0; display: flex; }
.pick::after { content: ""; position: absolute; right: 6px; top: 9px; border: 4px solid transparent; border-top-color: #000; border-bottom-width: 0; pointer-events: none; }
.pick select { appearance: none; width: 100%; height: 21px; border: 1px solid #d0d2d5; border-radius: 2px; background: linear-gradient(#f1f1f3, #e8e8e9); color: #000; font: inherit; padding: 0 12px; opacity: 1; }
.posicon { position: absolute; left: 13px; top: 4px; width: 16px; height: 13px; }
.pick.withicon select { padding-left: 31px; }
.go { width: 20px; height: 22px; border: 1px solid #c9cbce; border-radius: 2px; background: #efeff1; }
.off { color: #757575; }
.off .pick::after { border-top-color: #dcdcdc; }
.off .pick select { color: #757575; background: #f2f3f5; border-color: #e2e4e7; }
.text { flex: 1; min-width: 0; height: 18px; border: 1px solid #e0e2e5; background: #fafbff; font: inherit; color: #757575; padding: 0 2px; }
.check { display: flex; align-items: center; height: 14px; margin-bottom: 7px; white-space: nowrap; }
.body .check { height: 21px; margin: 0; padding-left: 1px; }
.check input { appearance: none; width: 14px; height: 13px; margin: 0 5px 0 0; border: 1px solid #6c6c6c; background: #f0f0f0; flex: none; display: flex; }
.check input:checked::before { content: ""; width: 10px; height: 9px; margin: 1px; background: #222; clip-path: polygon(0 55%, 16% 38%, 38% 62%, 82% 0, 100% 12%, 42% 100%); }
.check input:disabled { border-color: #cfd1d4; }
.check input:disabled:checked::before { background: #b0b0b0; }
fieldset { min-width: 0; margin: 0 3px; border: 1px solid #d0d3d7; padding: 7px 8px 0; }
fieldset.topped { margin-top: 7px; }
fieldset.next { margin-top: 6px; padding-bottom: 12px; }
legend { padding: 0 3px; margin-left: -3px; height: 14px; }
legend .check { margin: 0; }
.check.inner { padding-left: 1px; }

.rightcol { display: flex; flex-direction: column; gap: 6px; min-width: 0; min-height: 0; }
.graphics { flex: 1; background: linear-gradient(#fafbff 10%, #f0f6ff 55%, #e3f0ff); overflow: hidden; }
.split { display: flex; width: 36px; height: 20px; margin-right: 3px; border: 1px solid #2a93e8; border-radius: 2px; background: #9fd0fb; }
.split button { flex: 1; height: 18px; }
.split .caret { margin: 0; border-left: 1px solid #2a93e8; }
.toggle { width: 20px; height: 20px; margin-right: 3px; border: 1px solid #2a93e8; border-radius: 2px; background: #9fd0fb; }
.canvas { display: block; flex: 1; min-height: 0; width: 100%; }
.canvas text { font: 12px "DejaVu Sans", sans-serif; fill: #1c1c1c; }
.canvas .sup { font-size: 9px; }

.messages { flex: none; padding-bottom: 4px; }
.tabs { flex: none; display: flex; align-items: flex-end; height: 29px; font-size: 12px; color: #4a4a4a; padding: 0 1px 0 4px; background: linear-gradient(#d0d3d7, #d0d3d7) bottom / 100% 1px no-repeat; }
.tab { height: 23px; padding: 1px 4px 0; margin: 0 8px 1px 0; background: #ebebeb; color: #000; gap: 4px; }
.tab.on { height: 24px; margin-bottom: 0; background: #fafbff; border: 1px solid #d0d3d7; border-bottom: 0; color: #23539c; font-size: 13px; }
.fill { flex: 1; }
.msgtools { flex: none; height: 28px; display: flex; align-items: center; padding: 2px 0 0 5px; }
.log { margin: 0 4px; border: 1px solid #d0d3d7; display: grid; grid-template-columns: minmax(0, 1fr) 17px; grid-template-rows: 10px 17px; }
.log p { overflow: hidden; white-space: nowrap; height: 10px; padding-left: 2px; }
.log .thumb { flex: 399 0 0; }
.log .tail { flex: 57 0 0; }
.settings .vbar .space { flex: 79 0 0; }
.settings .vbar .thumb { flex: 319 0 0; }
.settings .vbar .tail { flex: 168 0 0; }

.status { flex: none; height: 32px; padding: 3px 0 0 7px; line-height: 33px; text-align: center; background: linear-gradient(90deg, #15151c 4%, #b8b8b8 4%, #b8b8b8 26%, #15151c 26%) bottom / 100% 1px no-repeat; }
</style>
